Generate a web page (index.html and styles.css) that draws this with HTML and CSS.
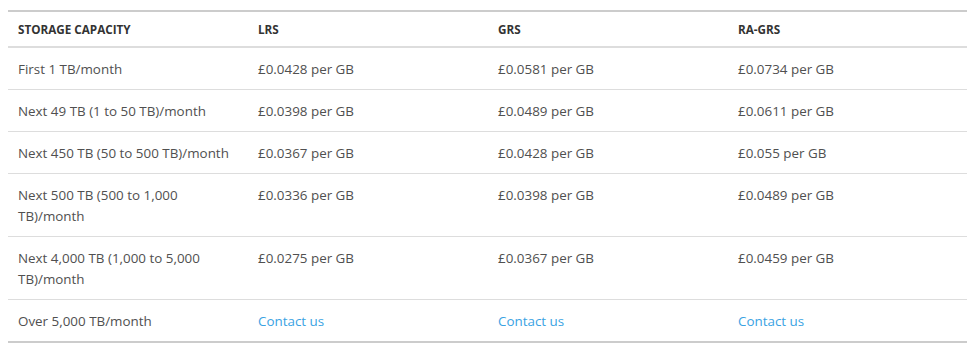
FILE: index.html
```html
<!DOCTYPE html>
<html>
<head>
<meta charset="utf-8">
<link rel="stylesheet" href="styles.css">
</head>
<body>
<table class="pricing">
  <thead>
    <tr><th>Storage capacity</th><th>LRS</th><th>GRS</th><th>RA-GRS</th></tr>
  </thead>
  <tbody>
    <tr><td>First 1 TB/month</td><td>£0.0428 per GB</td><td>£0.0581 per GB</td><td>£0.0734 per GB</td></tr>
    <tr><td>Next 49 TB (1 to 50 TB)/month</td><td>£0.0398 per GB</td><td>£0.0489 per GB</td><td>£0.0611 per GB</td></tr>
    <tr><td>Next 450 TB (50 to 500 TB)/month</td><td>£0.0367 per GB</td><td>£0.0428 per GB</td><td>£0.055 per GB</td></tr>
    <tr><td>Next 500 TB (500 to 1,000 TB)/month</td><td>£0.0336 per GB</td><td>£0.0398 per GB</td><td>£0.0489 per GB</td></tr>
    <tr><td>Next 4,000 TB (1,000 to 5,000 TB)/month</td><td>£0.0275 per GB</td><td>£0.0367 per GB</td><td>£0.0459 per GB</td></tr>
    <tr><td>Over 5,000 TB/month</td><td><a href="#">Contact us</a></td><td><a href="#">Contact us</a></td><td><a href="#">Contact us</a></td></tr>
  </tbody>
</table>
</body>
</html>
```
FILE: styles.css
```css
body {
  margin: 8px;
  background: #fff;
  font-family: "Open Sans", "Noto Sans", sans-serif;
}
.pricing {
  width: 959px;
  border-collapse: collapse;
  table-layout: fixed;
  border-top: 2px solid #cccccc;
  border-bottom: 2px solid #cccccc;
  margin-top: 2px;
}
.pricing th,
.pricing td {
  box-sizing: border-box;
  width: 240px;
  text-align: left;
  vertical-align: top;
  padding: 0 10px;
}
.pricing th {
  font-size: 11.7px;
  font-weight: 700;
  text-transform: uppercase;
  color: #333333;
  height: 34px;
  line-height: 34px;
  border-bottom: 2px solid #dddddd;
}
.pricing td {
  font-size: 13.4px;
  color: #505050;
  line-height: 21px;
  padding-top: 11px;
  padding-bottom: 9px;
  border-bottom: 1px solid #dddddd;
}
.pricing tbody tr:last-child td {
  border-bottom: none;
}
.pricing a {
  color: #3aa3e3;
  text-decoration: none;
}
```
